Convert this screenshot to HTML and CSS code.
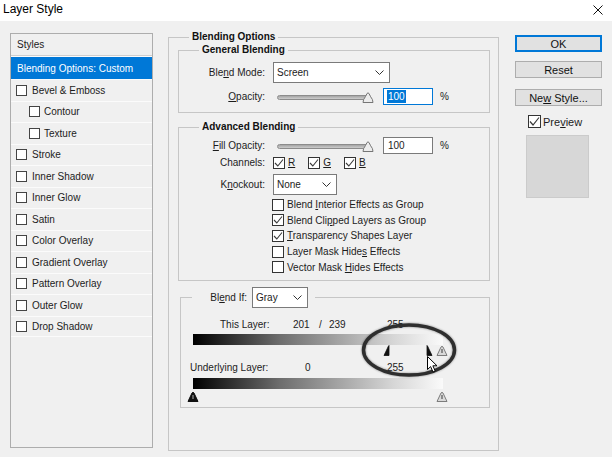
FILE: index.html
```html
<!DOCTYPE html>
<html lang="en">
<head>
<meta charset="utf-8">
<title>Layer Style</title>
<link rel="stylesheet" href="styles.css">
</head>
<body>
<div class="titlebar">
  <span class="title">Layer Style</span>
  <svg class="close" width="10" height="10" viewBox="0 0 10 10"><path d="M0.5 0.5 L9.5 9.5 M9.5 0.5 L0.5 9.5" stroke="#111" stroke-width="1" fill="none"/></svg>
</div>
<div class="main">
  <div class="styles-panel">
    <div class="styles-head">Styles</div>
    <div class="style-row active">Blending Options: Custom</div>
    <div class="style-row"><span class="cb"></span><span>Bevel &amp; Emboss</span></div>
    <div class="style-row sub"><span class="cb"></span><span>Contour</span></div>
    <div class="style-row sub"><span class="cb"></span><span>Texture</span></div>
    <div class="style-row"><span class="cb"></span><span>Stroke</span></div>
    <div class="style-row"><span class="cb"></span><span>Inner Shadow</span></div>
    <div class="style-row"><span class="cb"></span><span>Inner Glow</span></div>
    <div class="style-row"><span class="cb"></span><span>Satin</span></div>
    <div class="style-row"><span class="cb"></span><span>Color Overlay</span></div>
    <div class="style-row"><span class="cb"></span><span>Gradient Overlay</span></div>
    <div class="style-row"><span class="cb"></span><span>Pattern Overlay</span></div>
    <div class="style-row"><span class="cb"></span><span>Outer Glow</span></div>
    <div class="style-row last"><span class="cb"></span><span>Drop Shadow</span></div>
  </div>

  <fieldset class="blend-opts">
    <legend class="lg lg-outer">Blending Options</legend>

    <fieldset class="group general">
      <legend class="lg lg-group">General Blending</legend>
      <div class="frow row-mode">
        <span class="flabel">Ble<u>n</u>d Mode:</span>
        <div class="select sel-mode"><span>Screen</span><svg class="chev" width="9" height="5" viewBox="0 0 9 5"><path d="M0.5 0.5 L4.5 4.5 L8.5 0.5" stroke="#333" fill="none"/></svg></div>
      </div>
      <div class="frow row-opacity">
        <span class="flabel"><u>O</u>pacity:</span>
        <div class="slider"><div class="track"></div><svg class="sthumb" width="12" height="12" viewBox="0 0 12 12"><path d="M1 11.5 Q1 8.5 3.5 5.5 L5 2.5 Q6 1.2 7 2.5 L8.5 5.5 Q11 8.5 11 11.5 Z" fill="#ececec" stroke="#767676" stroke-width="1"/></svg></div>
        <div class="num focus"><span class="hl">100</span></div>
        <span class="pct">%</span>
      </div>
    </fieldset>

    <fieldset class="group advanced">
      <legend class="lg lg-group">Advanced Blending</legend>
      <div class="frow row-fill">
        <span class="flabel"><u>F</u>ill Opacity:</span>
        <div class="slider"><div class="track"></div><svg class="sthumb" width="12" height="12" viewBox="0 0 12 12"><path d="M1 11.5 Q1 8.5 3.5 5.5 L5 2.5 Q6 1.2 7 2.5 L8.5 5.5 Q11 8.5 11 11.5 Z" fill="#ececec" stroke="#767676" stroke-width="1"/></svg></div>
        <div class="num"><span>100</span></div>
        <span class="pct">%</span>
      </div>
      <div class="frow row-channels">
        <span class="flabel">Channels:</span>
        <div class="channels">
          <span class="ch"><span class="box checked"><svg width="10" height="10" viewBox="0 0 10 10"><path d="M1 5 L3.8 8 L9 1.5" stroke="#3a3a3a" stroke-width="1.1" fill="none"/></svg></span><u>R</u></span>
          <span class="ch"><span class="box checked"><svg width="10" height="10" viewBox="0 0 10 10"><path d="M1 5 L3.8 8 L9 1.5" stroke="#3a3a3a" stroke-width="1.1" fill="none"/></svg></span><u>G</u></span>
          <span class="ch"><span class="box checked"><svg width="10" height="10" viewBox="0 0 10 10"><path d="M1 5 L3.8 8 L9 1.5" stroke="#3a3a3a" stroke-width="1.1" fill="none"/></svg></span><u>B</u></span>
        </div>
      </div>
      <div class="frow row-knock">
        <span class="flabel">K<u>n</u>ockout:</span>
        <div class="select sel-knock"><span>None</span><svg class="chev" width="9" height="5" viewBox="0 0 9 5"><path d="M0.5 0.5 L4.5 4.5 L8.5 0.5" stroke="#333" fill="none"/></svg></div>
      </div>
      <div class="checks">
        <div class="crow"><span class="box"></span><span>Blend <u>I</u>nterior Effects as Group</span></div>
        <div class="crow"><span class="box checked"><svg width="10" height="10" viewBox="0 0 10 10"><path d="M1 5 L3.8 8 L9 1.5" stroke="#3a3a3a" stroke-width="1.1" fill="none"/></svg></span><span>Blend Cli<u>p</u>ped Layers as Group</span></div>
        <div class="crow"><span class="box checked"><svg width="10" height="10" viewBox="0 0 10 10"><path d="M1 5 L3.8 8 L9 1.5" stroke="#3a3a3a" stroke-width="1.1" fill="none"/></svg></span><span><u>T</u>ransparency Shapes Layer</span></div>
        <div class="crow"><span class="box"></span><span>Layer Mask Hide<u>s</u> Effects</span></div>
        <div class="crow"><span class="box"></span><span>Vector Mask <u>H</u>ides Effects</span></div>
      </div>
    </fieldset>

    <fieldset class="group blendif">
      <legend class="lg-if">
        <span class="if-label">Bl<u>e</u>nd If:</span>
        <span class="select sel-gray"><span>Gray</span><svg class="chev" width="9" height="5" viewBox="0 0 9 5"><path d="M0.5 0.5 L4.5 4.5 L8.5 0.5" stroke="#333" fill="none"/></svg></span>
      </legend>
      <div class="ramps">
        <div class="vrow row-this"><span class="v-this">This Layer:</span><span class="v-201">201</span><span class="v-slash">/</span><span class="v-239">239</span><span>255</span></div>
        <div class="ramp"></div>
        <svg class="thumbs" width="262" height="11" viewBox="0 0 262 11">
          <path d="M197 10.5 L201.5 1 L202 0.5 L202 10.5 Z" fill="#111" stroke="#111" stroke-width="0.8" stroke-linejoin="round"/>
          <path d="M240 0.5 L240.5 1 L245 10.5 L240 10.5 Z" fill="#111" stroke="#111" stroke-width="0.8" stroke-linejoin="round"/>
          <path d="M250 10.5 L254 2 Q255 0.6 256 2 L260 10.5 Z" fill="#d9d9d9" stroke="#7c7c7c" stroke-width="1" stroke-linejoin="round"/>
          <path d="M255 4 L255 8" stroke="#555" stroke-width="1.2"/>
        </svg>
        <div class="vrow row-under"><span class="v-under">Underlying Layer:</span><span class="v-0">0</span><span>255</span></div>
        <div class="ramp ramp2"></div>
        <svg class="thumbs thumbs2" width="262" height="11" viewBox="0 0 262 11">
          <path d="M1 10.5 L5 2 Q6 0.6 7 2 L11 10.5 Z" fill="#111" stroke="#111" stroke-width="1" stroke-linejoin="round"/>
          <path d="M6 4 L6 8" stroke="#9a9a9a" stroke-width="1.2"/>
          <path d="M250 10.5 L254 2 Q255 0.6 256 2 L260 10.5 Z" fill="#d9d9d9" stroke="#7c7c7c" stroke-width="1" stroke-linejoin="round"/>
          <path d="M255 4 L255 8" stroke="#555" stroke-width="1.2"/>
        </svg>
        <svg class="ring" width="102" height="60" viewBox="0 0 102 60"><ellipse cx="51" cy="30" rx="45.5" ry="25" fill="none" stroke="#2e2e2e" stroke-width="3.5"/></svg>
        <svg class="cursor" width="12" height="18" viewBox="0 0 12 18"><path d="M0.5 0.5 L0.5 13.5 L3.6 10.6 L6 16 L8.2 15 L5.9 9.8 L10 9.8 Z" fill="#fff" stroke="#000" stroke-width="1" stroke-linejoin="round"/></svg>
      </div>
    </fieldset>
  </fieldset>

  <div class="side">
    <div class="btn btn-ok"><span>OK</span></div>
    <div class="btn btn-reset"><span>Reset</span></div>
    <div class="btn btn-new"><span>Ne<u>w</u> Style...</span></div>
    <div class="preview"><span class="box pbox checked"><svg width="11" height="11" viewBox="0 0 11 11"><path d="M1 5.5 L4 9 L10 1.5" stroke="#3a3a3a" stroke-width="1.2" fill="none"/></svg></span><span>Pre<u>v</u>iew</span></div>
    <div class="swatch"></div>
  </div>
</div>
</body>
</html>
```

FILE: styles.css
```css
* { box-sizing: border-box; }
html, body { margin: 0; padding: 0; }
body {
  width: 612px;
  height: 457px;
  overflow: hidden;
  background: #f0f0f0;
  font-family: "Liberation Sans", Arial, sans-serif;
  font-size: 10px;
  color: #1c1c1c;
}
u { text-decoration: underline; text-underline-offset: 1px; }

.titlebar {
  height: 21px;
  background: #fff;
  display: flex;
  align-items: center;
  justify-content: space-between;
  padding: 0 9px 3px 3px;
}
.title { font-size: 12px; color: #000; }
.close { display: block; margin-top: 2px; }

.main { display: flex; align-items: flex-start; }

/* Styles list */
.styles-panel {
  margin: 12px 0 0 10px;
  width: 143px;
  height: 415px;
  border: 1px solid #adadad;
}
.styles-head {
  height: 22px;
  line-height: 21px;
  padding-left: 6px;
  border-bottom: 1px solid #cfcfcf;
}
.style-row {
  height: 21.5px;
  display: flex;
  align-items: center;
  padding-left: 5px;
  border-top: 1px solid #fbfbfb;
}
.style-row.sub { padding-left: 18px; }
.style-row.last { border-bottom: 1px solid #fbfbfb; }
.style-row.active {
  height: 23px;
  padding-left: 6px;
  background: #0078d7;
  background-clip: padding-box;
  color: #fff;
}
.cb {
  width: 11px;
  height: 11px;
  border: 1px solid #444;
  background: #fff;
  margin-right: 5px;
  flex: none;
}
.style-row.sub .cb { margin-right: 4px; }

/* Middle */
.blend-opts {
  margin: 10px 0 0 15px;
  width: 331px;
  height: 420px;
  min-width: 0;
  border: 1px solid #c6c6c6;
  padding: 0 8px 0 9px;
}
.lg {
  font-weight: bold;
  line-height: 12px;
  padding: 0 3px;
  color: #111;
}
.lg-outer { margin-left: 11px; }
.lg-group { margin-left: 20px; }

.group {
  margin: 0;
  min-width: 0;
  border: 1px solid #c6c6c6;
  padding: 0;
}
.general { margin-top: 1px; padding: 6px 0 7px; }
.advanced { margin-top: 8px; padding: 4px 0 5px; }

.frow { display: flex; align-items: center; }
.flabel { width: 86px; text-align: right; flex: none; }
.frow > .flabel + * { margin-left: 8px; }

.row-mode { height: 21px; }
.row-opacity { height: 17px; margin-top: 5px; }
.row-fill { height: 17px; }
.row-channels { height: 17px; }
.row-knock { height: 21px; margin-top: 3px; }

.select {
  display: flex;
  align-items: center;
  justify-content: space-between;
  height: 21px;
  background: #fff;
  border: 1px solid #7a7a7a;
  padding: 0 5px 0 3px;
  flex: none;
}
.chev { display: block; }
.sel-mode { width: 117px; }
.sel-knock { width: 64px; }

.slider {
  position: relative;
  width: 96px;
  height: 12px;
  flex: none;
}
.frow > .flabel + .slider { margin-left: 12px; }
.track {
  margin-top: 4px;
  width: 94px;
  height: 5px;
  border: 1px solid #8c8c8c;
  border-radius: 3px;
  background: linear-gradient(#a4a4a4, #cdcdcd);
}
.sthumb { position: absolute; left: 85px; top: 0; }

.num {
  margin-left: 10px;
  width: 50px;
  height: 17px;
  border: 1px solid #7a7a7a;
  background: #fff;
  display: flex;
  align-items: center;
  padding-left: 4px;
  flex: none;
  font-size: 10px;
}
.num.focus { border-color: #0078d7; padding-left: 3px; }
.hl { background: #0078d7; color: #fff; line-height: 13px; padding: 0 1px; }
.pct { margin-left: 7px; }

.channels { display: flex; align-items: center; gap: 13px; }
.ch { display: flex; align-items: center; }
.box {
  width: 12px;
  height: 12px;
  border: 1px solid #333;
  background: #fff;
  flex: none;
  display: flex;
  align-items: center;
  justify-content: center;
}
.box svg { display: block; }
.ch .box { margin-right: 3px; }

.checks { margin: 2px 0 0 93px; }
.crow { height: 15.6px; display: flex; align-items: center; }
.crow .box { margin-right: 3px; }

/* Blend If */
.blendif {
  margin: 6px 0 0 2px;
  padding: 0 0 5px;
}
.lg-if {
  margin-left: 11px;
  padding: 0 7px 0 3px;
  display: flex;
  align-items: center;
}
.if-label { width: 52px; text-align: right; margin-right: 5px; }
.sel-gray { width: 56px; padding-right: 5px; }

.ramps { position: relative; padding-top: 11px; }
.vrow { height: 12px; display: flex; align-items: center; }
.row-this { padding-left: 39px; }
.v-this { width: 73px; }
.v-201 { width: 26px; }
.v-slash { width: 10px; }
.v-239 { width: 58px; }
.row-under { padding-left: 9px; margin-top: 6px; }
.v-under { width: 115px; }
.v-0 { width: 82px; }

.ramp {
  margin: 3px 0 0 12px;
  width: 250px;
  height: 11px;
  background: linear-gradient(to right, #000 0%, #6e6e6e 35%, #d6d6d6 80%, #fafafa 100%);
}
.ramp2 { margin-top: 4px; }
.thumbs { display: block; margin-left: 6px; }
.thumbs2 { margin-top: 2px; }

.ring {
  position: absolute;
  left: 177px;
  top: 12px;
  filter: drop-shadow(0 0 1px rgba(0,0,0,0.45));
}
.cursor { position: absolute; left: 245.5px; top: 48.5px; }

/* Right column */
.side {
  margin: 14px 0 0 16px;
  width: 87px;
  display: flex;
  flex-direction: column;
}
.btn {
  height: 17px;
  border: 1px solid #adadad;
  background: #e1e1e1;
  font-size: 11px;
  color: #111;
  display: flex;
  align-items: center;
  justify-content: center;
}
.btn-ok { border: 2px solid #0078d7; }
.btn-reset { margin-top: 9px; }
.btn-new { margin-top: 11px; }
.preview {
  margin-top: 9px;
  height: 13px;
  padding-left: 13px;
  display: flex;
  align-items: center;
  font-size: 11px;
}
.pbox { width: 13px; height: 13px; margin-right: 2px; }
.swatch {
  margin: 7px 0 0 11px;
  width: 63px;
  height: 63px;
  background: #d7d7d7;
  border: 1px solid #cbcbcb;
}
```
